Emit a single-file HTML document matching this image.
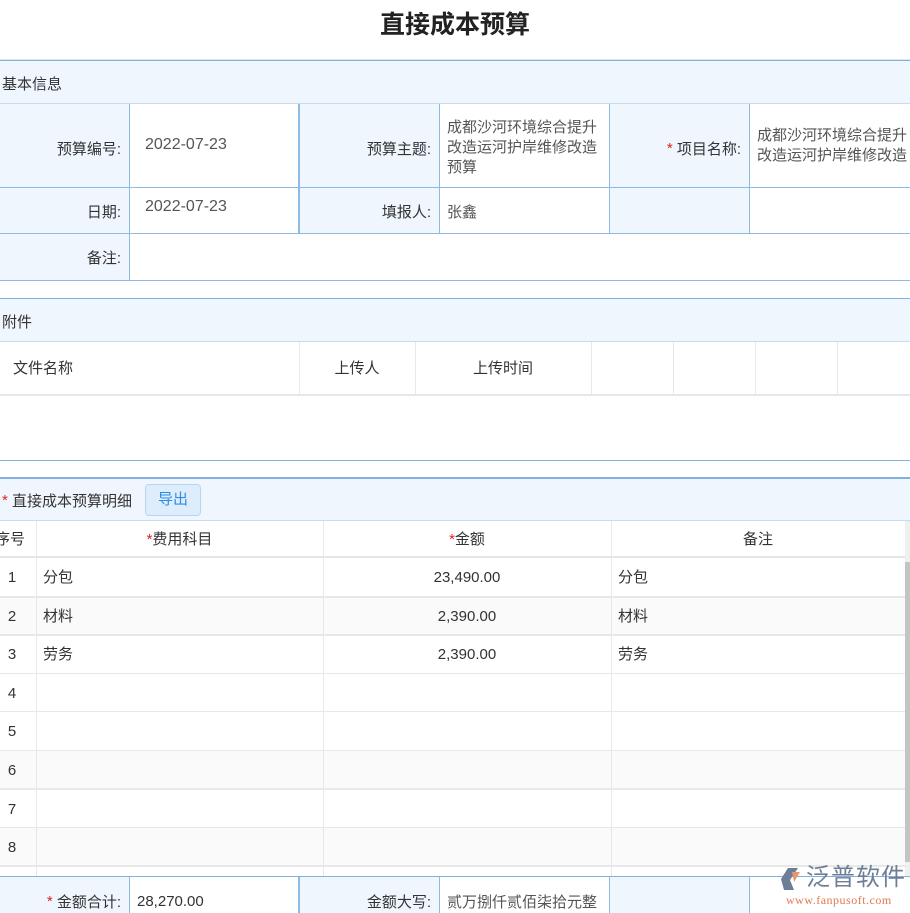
<!DOCTYPE html>
<html><head><meta charset="utf-8"><style>
*{margin:0;padding:0;box-sizing:border-box}
body{width:910px;height:913px;overflow:hidden;background:#fff;font-family:"Liberation Sans","Noto Sans CJK SC",sans-serif;font-size:15px;color:#333;position:relative}
.a{position:absolute}
.lb{background:#eff6fe;text-align:right;padding-right:8px;display:flex;align-items:center;justify-content:flex-end;color:#333}
.vl{display:flex;align-items:center;padding-left:8px;padding-right:6px;color:#555}
.hd{background:#f0f6fe;border-top:1px solid #7fb2e0;border-bottom:1px solid #c8dcf0;display:flex;align-items:center;padding-left:2px}
.r{color:#e02020}
.gl{background:#e8e8e8}
</style></head><body>
<div class="a" style="left:0;top:9px;width:910px;text-align:center;font-size:25px;font-weight:bold;color:#222;line-height:32px">直接成本预算</div>
<div class="a" style="left:0;top:59px;width:910px;height:1px;background:#dde6ee"></div>

<div class="a hd" style="left:0;top:60px;width:910px;height:44px;padding-top:2px">基本信息</div>
<div class="a lb" style="left:0;top:104px;width:129px;height:84px;padding-top:4px">预算编号:</div>
<div class="a vl" style="left:129px;top:104px;width:169px;height:84px;padding-left:16px;font-size:16px;align-items:flex-start;padding-top:32px">2022-07-23</div>
<div class="a lb" style="left:299px;top:104px;width:140px;height:84px;padding-top:4px">预算主题:</div>
<div class="a vl" style="left:439px;top:104px;width:170px;height:84px;line-height:20px;padding-top:4px">成都沙河环境综合提升改造运河护岸维修改造预算</div>
<div class="a lb" style="left:609px;top:104px;width:140px;height:84px;padding-top:4px"><span class="r">*</span>&nbsp;项目名称:</div>
<div class="a vl" style="left:749px;top:104px;width:161px;height:84px;line-height:20px;white-space:nowrap;overflow:hidden;display:block;padding-top:22px">成都沙河环境综合提升<br>改造运河护岸维修改造</div>

<div class="a lb" style="left:0;top:188px;width:129px;height:46px">日期:</div>
<div class="a vl" style="left:129px;top:188px;width:169px;height:46px;padding-left:16px;font-size:16px;align-items:flex-start;padding-top:10px">2022-07-23</div>
<div class="a lb" style="left:299px;top:188px;width:140px;height:46px">填报人:</div>
<div class="a vl" style="left:439px;top:188px;width:170px;height:46px">张鑫</div>
<div class="a lb" style="left:609px;top:188px;width:140px;height:46px"></div>

<div class="a lb" style="left:0;top:234px;width:129px;height:47px">备注:</div>

<div class="a" style="left:0;top:187px;width:910px;height:1px;background:#8dbbe3"></div>
<div class="a" style="left:0;top:233px;width:910px;height:1px;background:#8dbbe3"></div>
<div class="a" style="left:0;top:280px;width:910px;height:1px;background:#8dbbe3"></div>
<div class="a" style="left:129px;top:104px;width:1px;height:177px;background:#8dbbe3"></div>
<div class="a" style="left:298px;top:104px;width:2px;height:130px;background:#8dbbe3"></div>
<div class="a" style="left:439px;top:104px;width:1px;height:130px;background:#8dbbe3"></div>
<div class="a" style="left:609px;top:104px;width:1px;height:130px;background:#8dbbe3"></div>
<div class="a" style="left:749px;top:104px;width:1px;height:130px;background:#8dbbe3"></div>

<div class="a hd" style="left:0;top:298px;width:910px;height:44px;padding-top:2px">附件</div>
<div class="a" style="left:13px;top:342px;height:53px;line-height:53px;font-size:15px">文件名称</div>
<div class="a" style="left:299px;top:342px;width:116px;height:53px;line-height:53px;text-align:center;font-size:15px">上传人</div>
<div class="a" style="left:415px;top:342px;width:176px;height:53px;line-height:53px;text-align:center;font-size:15px">上传时间</div>
<div class="a gl" style="left:299px;top:342px;width:1px;height:53px"></div>
<div class="a gl" style="left:415px;top:342px;width:1px;height:53px"></div>
<div class="a gl" style="left:591px;top:342px;width:1px;height:53px"></div>
<div class="a gl" style="left:673px;top:342px;width:1px;height:53px"></div>
<div class="a gl" style="left:755px;top:342px;width:1px;height:53px"></div>
<div class="a gl" style="left:837px;top:342px;width:1px;height:53px"></div>
<div class="a" style="left:0;top:394px;width:910px;height:2px;background:#e4e8ee"></div>
<div class="a" style="left:0;top:460px;width:910px;height:1px;background:#7fb2e0"></div>

<div class="a hd" style="left:0;top:477px;width:910px;height:44px;border-top:2px solid #7fb2e0;padding-top:2px"><span class="r">*</span>&nbsp;直接成本预算明细</div>
<div class="a" style="left:145px;top:484px;width:56px;height:32px;background:#deedfb;border:1px solid #b8d6f2;border-radius:4px;color:#2d8ce8;text-align:center;line-height:30px">导出</div>

<div class="a" style="left:0;top:521px;width:910px;height:37px;border-bottom:2px solid #e6e6e6"></div>
<div class="a" style="left:-5px;top:521px;height:37px;line-height:38px">序号</div>
<div class="a" style="left:36px;top:521px;width:287px;height:37px;line-height:38px;text-align:center"><span class="r">*</span>费用科目</div>
<div class="a" style="left:323px;top:521px;width:288px;height:37px;line-height:38px;text-align:center"><span class="r">*</span>金额</div>
<div class="a" style="left:611px;top:521px;width:294px;height:37px;line-height:38px;text-align:center">备注</div>

<div class="a" style="left:0;top:597px;width:905px;height:38px;background:#fafafa"></div>
<div class="a" style="left:0;top:751px;width:905px;height:38px;background:#fafafa"></div>
<div class="a" style="left:0;top:828px;width:905px;height:38px;background:#fafafa"></div>
<div class="a gl" style="left:0;top:596px;width:905px;height:2px"></div>
<div class="a gl" style="left:0;top:634px;width:905px;height:2px"></div>
<div class="a gl" style="left:0;top:673px;width:905px;height:1px"></div>
<div class="a gl" style="left:0;top:711px;width:905px;height:1px"></div>
<div class="a gl" style="left:0;top:750px;width:905px;height:1px"></div>
<div class="a gl" style="left:0;top:788px;width:905px;height:2px"></div>
<div class="a gl" style="left:0;top:827px;width:905px;height:1px"></div>
<div class="a gl" style="left:0;top:865px;width:905px;height:2px"></div>
<div class="a gl" style="left:36px;top:521px;width:1px;height:356px"></div>
<div class="a gl" style="left:323px;top:521px;width:1px;height:356px"></div>
<div class="a gl" style="left:611px;top:521px;width:1px;height:356px"></div>

<div class="a" style="left:0;top:559px;width:24px;line-height:38.6px;text-align:center">1<br>2<br>3<br>4<br>5<br>6<br>7<br>8</div>
<div class="a" style="left:43px;top:559px;line-height:38.6px">分包<br>材料<br>劳务</div>
<div class="a" style="left:323px;top:559px;width:288px;line-height:38.6px;text-align:center;color:#333">23,490.00<br>2,390.00<br>2,390.00</div>
<div class="a" style="left:618px;top:559px;line-height:38.6px">分包<br>材料<br>劳务</div>
<div class="a" style="left:905px;top:521px;width:5px;height:356px;background:#f0f0f0"></div>
<div class="a" style="left:905px;top:562px;width:5px;height:300px;background:#c4c4c4"></div>

<div class="a" style="left:0;top:876px;width:910px;height:1px;background:#7fb2e0"></div>
<div class="a lb" style="left:0;top:877px;width:129px;height:36px;padding-top:12px"><span class="r">*</span>&nbsp;金额合计:</div>
<div class="a vl" style="left:129px;top:877px;width:169px;height:36px;color:#333;padding-top:12px;font-size:15px">28,270.00</div>
<div class="a lb" style="left:299px;top:877px;width:140px;height:36px;padding-top:12px">金额大写:</div>
<div class="a vl" style="left:439px;top:877px;width:170px;height:36px;padding-top:12px">贰万捌仟贰佰柒拾元整</div>
<div class="a lb" style="left:609px;top:877px;width:140px;height:36px"></div>
<div class="a" style="left:129px;top:877px;width:1px;height:36px;background:#8dbbe3"></div>
<div class="a" style="left:298px;top:877px;width:2px;height:36px;background:#8dbbe3"></div>
<div class="a" style="left:439px;top:877px;width:1px;height:36px;background:#8dbbe3"></div>
<div class="a" style="left:609px;top:877px;width:1px;height:36px;background:#8dbbe3"></div>
<div class="a" style="left:749px;top:877px;width:1px;height:36px;background:#8dbbe3"></div>

<svg class="a" style="left:780px;top:866px" width="24" height="26" viewBox="0 0 24 26"><path d="M8 2 L18 2 L10 14 L14 24 L4 24 L1 13 Z" fill="#6e7e98"/><path d="M12 6 L20 6 L14 16 Z" fill="#e8956a"/></svg>
<div class="a" style="left:806px;top:864px;font-size:24px;color:#6e7e98;letter-spacing:1px;line-height:28px">泛普软件</div>
<div class="a" style="left:786px;top:893px;font-family:'Liberation Serif',serif;font-size:12px;color:#e07a50;letter-spacing:0.5px">www.fanpusoft.com</div>
</body></html>
